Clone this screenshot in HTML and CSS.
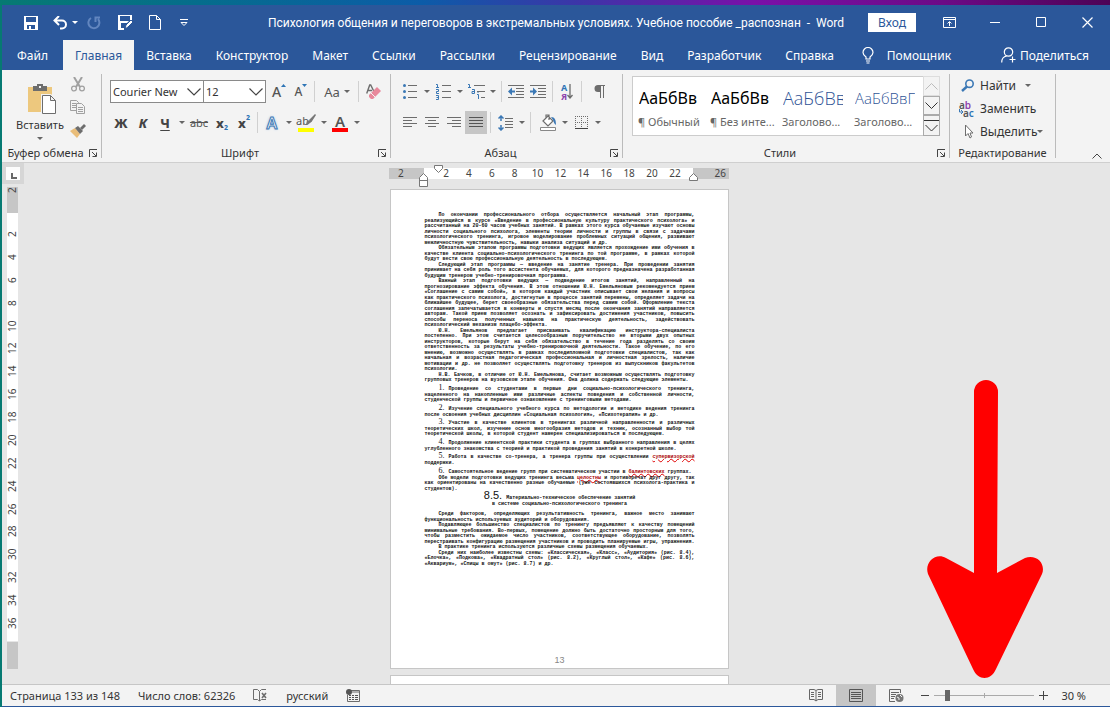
FILE: index.html
```html
<!DOCTYPE html>
<html lang="ru">
<head>
    <meta charset="UTF-8">
    <meta name="viewport" content="width=device-width, initial-scale=1.0">
    <title>Психология общения и переговоров - Word</title>
    <link rel="stylesheet" href="styles.css">
</head>
<body>
<div class="window">
    <header class="titlebar">
        <div class="quick-access">
            <button aria-label="Сохранить"><svg width="14" height="14" viewBox="0 0 14 14"><path d="M0 0h14v14H0z M2 1v5h10V1z M3 9v4h2v-3h2v3h4V9z" fill="#fff" fill-rule="evenodd"/></svg></button>
            <button class="undo" aria-label="Отменить"><svg width="15" height="14" viewBox="0 0 15 14"><path d="M6 0L1.500 4.500L6 9M2 4.500h7a4 4 0 0 1 0 8H7" fill="none" stroke="#fff" stroke-width="2"/></svg></button>
            <button class="dd" aria-label="Список отмены"></button>
            <button class="redo" aria-label="Повторить"><svg width="14" height="14" viewBox="0 0 14 14"><path d="M4 2a5.500 5.500 0 1 0 7 1M8.500 6V1.500H13" fill="none" stroke="#6286bf" stroke-width="2"/></svg></button>
            <button aria-label="Сохранить как"><svg width="16" height="15" viewBox="0 0 16 15"><path d="M0 0h14v5h-2V1H2v5h9l-2 2H3v5h3v2H0z" fill="#fff" fill-rule="evenodd"/><path d="M7 14l1-4 5-5 2 2-5 5z" fill="#fff" stroke="#2b579a"/></svg></button>
            <button aria-label="Создать"><svg width="12" height="15" viewBox="0 0 12 15"><path d="M.5.500h7l4 4v10H.5zM7.500.5v4h4" fill="none" stroke="#fff"/></svg></button>
            <button class="customize" aria-label="Настройка панели"><svg width="9" height="8" viewBox="0 0 9 8"><path d="M0 .5h8M1 3.500h6L4 6.500z" fill="none" stroke="#fff"/></svg></button>
        </div>
        <div class="doc-title">Психология общения и переговоров в экстремальных условиях. Учебное пособие _распознан &nbsp;-&nbsp; Word</div>
        <div class="window-controls">
            <button class="login">Вход</button>
            <button aria-label="Параметры ленты"><svg width="13" height="11" viewBox="0 0 13 11"><path d="M.5.5h12v10H.5zM.5 2.500h12M6.500 9V5M4.500 6.500l2-2 2 2" fill="none" stroke="#fff"/></svg></button>
            <button aria-label="Свернуть"><svg width="11" height="11" viewBox="0 0 11 11"><path d="M0 5.500h10" stroke="#fff"/></svg></button>
            <button aria-label="Развернуть"><svg width="11" height="11" viewBox="0 0 11 11"><path d="M.5.5h9v9h-9z" fill="none" stroke="#fff"/></svg></button>
            <button aria-label="Закрыть"><svg width="11" height="11" viewBox="0 0 11 11"><path d="M.5.5l10 10M10.500.5l-10 10" stroke="#fff" stroke-width="1.200"/></svg></button>
        </div>
    </header>

    <nav class="tabs">
        <a href="#">Файл</a>
        <a href="#" class="active">Главная</a>
        <a href="#">Вставка</a>
        <a href="#">Конструктор</a>
        <a href="#">Макет</a>
        <a href="#">Ссылки</a>
        <a href="#">Рассылки</a>
        <a href="#">Рецензирование</a>
        <a href="#">Вид</a>
        <a href="#">Разработчик</a>
        <a href="#">Справка</a>
        <a href="#" class="helper"><svg width="12" height="17" viewBox="0 0 12 17"><path d="M4 12v-2C2 8.500 1 7.500 1 5.500a5 5 0 0 1 10 0C11 7.500 10 8.500 8 10v2zM4 14h4M4.500 16h3" fill="none" stroke="#fff" stroke-width="1.200"/></svg>Помощник</a>
        <a href="#" class="share"><svg width="15" height="16" viewBox="0 0 15 16"><circle cx="7.500" cy="5" r="4.200" fill="none" stroke="#fff" stroke-width="1.200"/><path d="M.7 15.500c0-3.500 2-6 5-6.500M11.500 9.500v6M8.500 12.500h6" fill="none" stroke="#fff" stroke-width="1.200"/></svg>Поделиться</a>
    </nav>

    <section class="ribbon">
        <div class="group clipboard">
            <div class="group-body">
                <button class="paste">
                    <svg width="29" height="31" viewBox="0 0 29 31"><path d="M0 3h24v25H0z" fill="#edc87e"/><path d="M5 2h4V0h6v2h4v5H5z" fill="#6d6d6d"/><path d="M11 2h2v2h-2z" fill="#f3f3f3"/><path d="M13 10h10l6 6v15H13z" fill="#f3f3f3"/><path d="M14.500 11.500h8l5 5v13h-13zM22.500 11.500v5h5" fill="#fff" stroke="#6d6d6d"/></svg>
                    <span>Вставить</span>
                    <i class="arrow"></i>
                </button>
                <div class="clip-tools">
                    <button aria-label="Вырезать"><svg width="14" height="15" viewBox="0 0 14 15"><path d="M3 0l6 10M11 0L5 10" stroke="#a0a0a0" stroke-width="2"/><circle cx="3" cy="11.500" r="2.400" fill="none" stroke="#a0a0a0" stroke-width="1.300"/><circle cx="11" cy="11.500" r="2.400" fill="none" stroke="#a0a0a0" stroke-width="1.300"/></svg></button>
                    <button aria-label="Копировать"><svg width="16" height="14" viewBox="0 0 16 14"><path d="M.5.5h6l2 2v8h-8zM2 3.500h4M2 5.500h4M2 7.500h4" fill="none" stroke="#a0a0a0"/><path d="M6.500 3.500h5l3 3v7h-8zM8 7.500h5M8 9.500h5M8 11.500h5" fill="#f3f3f3" stroke="#a0a0a0"/></svg></button>
                    <button aria-label="Формат по образцу"><svg width="16" height="15" viewBox="0 0 16 15"><path d="M0 8l5-3 5 6-3 4z" fill="#e9bd79"/><path d="M5 5l3-2 5 5-3 3z" fill="#6d6d6d"/><path d="M10 5l4-4 2 2-4 4z" fill="#6d6d6d"/></svg></button>
                </div>
            </div>
            <div class="group-label"><span>Буфер обмена</span><button class="launcher" aria-label="Буфер обмена, параметры"><svg width="9" height="9" viewBox="0 0 9 9"><path d="M.5 8V.5H8M3 3l4 4M7.500 3.500v4h-4" fill="none" stroke="#444"/></svg></button></div>
        </div>

        <div class="group font">
            <div class="rows">
                <div class="row">
                    <label class="combo combo-font"><select aria-label="Шрифт"><option>Courier New</option></select><svg width="14" height="8" viewBox="0 0 14 8"><path d="M.5.5L7 7 13.500.5" fill="none" stroke="#444" stroke-width="1.200"/></svg></label>
                    <label class="combo combo-size"><select aria-label="Размер шрифта"><option>12</option></select><svg width="14" height="8" viewBox="0 0 14 8"><path d="M.5.5L7 7 13.500.5" fill="none" stroke="#444" stroke-width="1.200"/></svg></label>
                    <button class="tool grow">A<svg width="5" height="3" viewBox="0 0 5 3"><path d="M0 3h5L2.500 0z" fill="#2e75b6"/></svg></button>
                    <button class="tool shrink">A<svg width="5" height="3" viewBox="0 0 5 3"><path d="M0 0h5L2.500 3z" fill="#2e75b6"/></svg></button>
                    <i class="sep"></i>
                    <button class="tool case">Aa<i class="arrow"></i></button>
                    <i class="sep"></i>
                    <button class="tool" aria-label="Удалить форматирование"><svg width="15" height="16" viewBox="0 0 15 16"><path d="M.7 9.500L3.700 1h1l3 6M2 6.500h4" fill="none" stroke="#6d6d6d" stroke-width="1.400"/><path d="M3 11l8-8 4 4-8 8H5l-2-2z" fill="#e8889b"/><path d="M5 9l4 4" stroke="#f3f3f3"/></svg></button>
                </div>
                <div class="row">
                    <button class="tool bold">Ж</button>
                    <button class="tool bold italic">К</button>
                    <button class="tool bold under">Ч</button>
                    <button class="dd" aria-label="Вид подчёркивания"></button>
                    <button class="tool wide strike">abc</button>
                    <button class="tool bold">x<sub>2</sub></button>
                    <button class="tool bold">x<sup>2</sup></button>
                    <i class="sep"></i>
                    <button class="tool effects">A</button>
                    <button class="dd" aria-label="Эффекты текста"></button>
                    <button class="tool marker"><span>ab</span><svg width="10" height="11" viewBox="0 0 10 11"><path d="M0 10.500l1-4 5 0 0 1-4 3zM3 6l6-6 1 1-4.500 7z" fill="#777"/></svg></button>
                    <button class="dd" aria-label="Цвет выделения"></button>
                    <button class="tool text-color">A</button>
                    <button class="dd" aria-label="Цвет текста"></button>
                </div>
            </div>
            <div class="group-label"><span>Шрифт</span><button class="launcher" aria-label="Шрифт, параметры"><svg width="9" height="9" viewBox="0 0 9 9"><path d="M.5 8V.5H8M3 3l4 4M7.500 3.500v4h-4" fill="none" stroke="#444"/></svg></button></div>
        </div>

        <div class="group paragraph">
            <div class="rows">
                <div class="row">
                    <button class="tool" aria-label="Маркеры"><svg width="14" height="15" viewBox="0 0 14 15"><g fill="#3b78b5"><circle cx="1.500" cy="1.500" r="1.500"/><circle cx="1.500" cy="7.500" r="1.500"/><circle cx="1.500" cy="13.500" r="1.500"/></g><path d="M5 1.500h9M5 7.500h9M5 13.500h9" stroke="#6d6d6d"/></svg></button>
                    <button class="dd" aria-label="Библиотека маркеров"></button>
                    <button class="tool" aria-label="Нумерация"><svg width="15" height="17" viewBox="0 0 15 17"><path d="M0 1.500h1.500V5M0 4.500h3M0 6.500h2.500v2h-2v2H3M0 12.500h2.500v4H0M.5 14.500h2" fill="none" stroke="#3b78b5"/><path d="M6 2.500h9M6 8.500h9M6 14.500h9" stroke="#6d6d6d"/></svg></button>
                    <button class="dd" aria-label="Библиотека нумерации"></button>
                    <button class="tool" aria-label="Многоуровневый список"><svg width="17" height="17" viewBox="0 0 17 17"><path d="M0 1.500h1.500V5M0 4.500h3M4 6.500h2.500v4H4v-2h3M9 11.500h1.500V16M10 9v1" fill="none" stroke="#3b78b5"/><path d="M6 2.500h11M9 8.500h8M13 14.500h4" stroke="#6d6d6d"/></svg></button>
                    <button class="dd" aria-label="Список уровней"></button>
                    <i class="sep"></i>
                    <button class="tool" aria-label="Уменьшить отступ"><svg width="16" height="13" viewBox="0 0 16 13"><path d="M0 .5h16M8 3.500h8M8 6.500h8M8 9.500h8M0 12.500h16" stroke="#6d6d6d"/><path d="M0 6.500l4-4v3h3v2H4v3z" fill="#3b78b5"/></svg></button>
                    <button class="tool" aria-label="Увеличить отступ"><svg width="16" height="13" viewBox="0 0 16 13"><path d="M0 .5h16M8 3.500h8M8 6.500h8M8 9.500h8M0 12.500h16" stroke="#6d6d6d"/><path d="M7 6.500l-4-4v3H0v2h3v3z" fill="#3b78b5"/></svg></button>
                    <i class="sep"></i>
                    <button class="tool sort" aria-label="Сортировка"><span><b>А</b><b>Я</b></span><svg width="6" height="15" viewBox="0 0 6 15"><path d="M3 0v14M.5 11L3 14l2.500-3" fill="none" stroke="#6d6d6d" stroke-width="1.300"/></svg></button>
                    <i class="sep"></i>
                    <button class="tool pilcrow" aria-label="Отобразить все знаки"><svg width="11" height="13" viewBox="0 0 11 13"><path d="M4 0h7v1h-1v12H9V1H7v12H6V7H4a3.500 3.500 0 0 1 0-7z" fill="#6d6d6d"/></svg></button>
                </div>
                <div class="row">
                    <button class="tool" aria-label="По левому краю"><svg width="14" height="11" viewBox="0 0 14 11"><path d="M0 .5h14M0 3.500h9M0 6.500h14M0 9.500h9" stroke="#6d6d6d"/></svg></button>
                    <button class="tool" aria-label="По центру"><svg width="14" height="11" viewBox="0 0 14 11"><path d="M0 .5h14M3 3.500h8M0 6.500h14M3 9.500h8" stroke="#6d6d6d"/></svg></button>
                    <button class="tool" aria-label="По правому краю"><svg width="14" height="11" viewBox="0 0 14 11"><path d="M0 .5h14M5 3.500h9M0 6.500h14M5 9.500h9" stroke="#6d6d6d"/></svg></button>
                    <button class="tool pressed" aria-label="По ширине"><svg width="14" height="11" viewBox="0 0 14 11"><path d="M0 .5h14M0 3.500h14M0 6.500h14M0 9.500h14" stroke="#555"/></svg></button>
                    <i class="sep"></i>
                    <button class="tool" aria-label="Интервал"><svg width="15" height="16" viewBox="0 0 15 16"><path d="M3 1v5M3 10v5M.5 3.500L3 1l2.500 2.500M.5 12.500L3 15l2.500-2.500" fill="none" stroke="#3b78b5" stroke-width="1.500"/><path d="M7 3.500h8M7 6.500h8M7 9.500h8M7 12.500h8" stroke="#6d6d6d"/></svg></button>
                    <button class="dd" aria-label="Выбор интервала"></button>
                    <i class="sep"></i>
                    <button class="tool fill" aria-label="Заливка"><svg width="17" height="17" viewBox="0 0 17 17"><path d="M3 7l5-5 5 5-5 5zM6 5V1h3v5" fill="#fff" stroke="#6d6d6d" stroke-width="1.200"/><path d="M11 3c4 0 5 3 5 8-2-1-2-3-3-5z" fill="#3b78b5"/><path d="M.5 13.500h15v3H.5z" fill="#fff" stroke="#888"/></svg></button>
                    <button class="dd" aria-label="Цвет заливки"></button>
                    <button class="tool" aria-label="Границы"><svg width="13" height="13" viewBox="0 0 13 13"><path d="M0 .5h13M0 6.500h13M.5 0v12M6.500 0v12M12.500 0v12" stroke="#6d6d6d" stroke-dasharray="1 1"/><path d="M0 12.500h13" stroke="#444"/></svg></button>
                    <button class="dd" aria-label="Виды границ"></button>
                </div>
            </div>
            <div class="group-label"><span>Абзац</span><button class="launcher" aria-label="Абзац, параметры"><svg width="9" height="9" viewBox="0 0 9 9"><path d="M.5 8V.5H8M3 3l4 4M7.500 3.500v4h-4" fill="none" stroke="#444"/></svg></button></div>
        </div>

        <div class="group styles">
            <div class="gallery">
                <button class="style-item"><b>АаБбВв</b><span>¶ Обычный</span></button>
                <button class="style-item"><b>АаБбВв</b><span>¶ Без инте...</span></button>
                <button class="style-item heading1"><b>АаБбВв</b><span>Заголово...</span></button>
                <button class="style-item heading2"><b>АаБбВвГ</b><span>Заголово...</span></button>
                <div class="gallery-scroll">
                    <button aria-label="Вверх" disabled><svg width="13" height="7" viewBox="0 0 13 7"><path d="M.5 6.500l6-6 6 6" fill="none" stroke="#bbb"/></svg></button>
                    <button aria-label="Вниз"><svg width="13" height="7" viewBox="0 0 13 7"><path d="M.5.5l6 6 6-6" fill="none" stroke="#333"/></svg></button>
                    <button aria-label="Все стили"><svg width="15" height="12" viewBox="0 0 15 12"><path d="M0 .5h15M1.500 5l6 6 6-6" fill="none" stroke="#333"/></svg></button>
                </div>
            </div>
            <div class="group-label"><span>Стили</span><button class="launcher" aria-label="Стили, параметры"><svg width="9" height="9" viewBox="0 0 9 9"><path d="M.5 8V.5H8M3 3l4 4M7.500 3.500v4h-4" fill="none" stroke="#444"/></svg></button></div>
        </div>

        <div class="group editing">
            <div class="edit-list">
                <button><svg width="14" height="13" viewBox="0 0 14 13"><circle cx="8.500" cy="4.700" r="3.700" fill="none" stroke="#3b78b5" stroke-width="1.600"/><path d="M6 7.500L1 12" stroke="#3b78b5" stroke-width="2.400"/></svg><span class="find">Найти</span><i class="arrow"></i></button>
                <button><span class="replace-icon"><b>a<em>b</em></b><b><svg width="4" height="5" viewBox="0 0 4 5"><path d="M.5 0v3H4M2 1l2 2-2 2" fill="none" stroke="#3b78b5"/></svg>a<u>c</u></b></span><span>Заменить</span></button>
                <button><svg width="14" height="15" viewBox="0 0 14 15"><path d="M4.500 1v11l2.500-2.500L9 14l1.500-1L9 9h3z" fill="#fff" stroke="#6d6d6d"/></svg><span>Выделить</span><i class="arrow"></i></button>
            </div>
            <div class="group-label"><span>Редактирование</span></div>
        </div>
        <button class="collapse" aria-label="Свернуть ленту"><svg width="10" height="6" viewBox="0 0 10 6"><path d="M.5 5.500L5 1l4.500 4.500" fill="none" stroke="#444"/></svg></button>
    </section>

    <main class="workspace">
        <aside class="side">
            <button class="tab-stop" aria-label="Табуляция"><svg width="6" height="6" viewBox="0 0 6 6"><path d="M1 0v5h5" fill="none" stroke="#666" stroke-width="2"/></svg></button>
            <div class="ruler-v">
                <div class="margin-top"><span>2</span></div>
                <div class="ticks"><span>2</span><span>4</span><span>6</span><span>8</span><span>10</span><span>12</span><span>14</span><span>16</span><span>18</span><span>20</span><span>22</span><span>24</span><span>26</span><span>28</span><span>30</span><span>32</span><span>34</span><span>36</span></div>
                <div class="margin-bottom"></div>
            </div>
        </aside>
        <div class="canvas">
            <div class="ruler-h">
                <div class="margin-left">2</div>
                <div class="ticks"><span>2</span><span>4</span><span>6</span><span>8</span><span>10</span><span>12</span><span>14</span><span>16</span><span>18</span><span>20</span><span>22</span></div>
                <div class="margin-right">26</div>
                <svg class="mark mark-first" width="9" height="8" viewBox="0 0 9 8"><path d="M.5.5h8v3l-4 4-4-4z" fill="#fff" stroke="#777"/></svg>
                <svg class="mark mark-hang" width="9" height="14" viewBox="0 0 9 14"><path d="M.5 4.500l4-4 4 4v9h-8zM.5 7.500h8" fill="#fff" stroke="#777"/></svg>
                <svg class="mark mark-right" width="9" height="8" viewBox="0 0 9 8"><path d="M.5 7.500v-3l4-4 4 4v3z" fill="#fff" stroke="#777"/></svg>
            </div>
            <article class="page">
                <div class="prose">
                    <p class="first">По окончании профессионального отбора осуществляется начальный этап программы,</p>
                    <p>реализующийся в курсе «Введение в профессиональную культуру практического психолога» и</p>
                    <p>рассчитанный на 20-60 часов учебных занятий. В рамках этого курса обучаемые изучают основы</p>
                    <p>личности социального психолога, элементы теории личности и группы в связи с задачами</p>
                    <p>психологического тренинга, игровое моделирование проблемных ситуаций общения, развивают</p>
                    <p class="last">межличностную чувствительность, навыки анализа ситуаций и др.</p>
                    <p class="first">Обязательным этапом программы подготовки ведущих является прохождение ими обучения в</p>
                    <p>качестве клиента социально-психологического тренинга по той программе, в рамках которой</p>
                    <p class="last">будут вести свою профессиональную деятельность в последующем.</p>
                    <p class="first">Следующий этап программы — введение на занятие тренера. При проведении занятия</p>
                    <p>принимает на себя роль того ассистента обучаемых, для которого предназначена разработанная</p>
                    <p class="last">будущим тренером учебно-тренировочная программа.</p>
                    <p class="first">Важный этап подготовки ведущих — подведение итогов занятий, направленный на</p>
                    <p>прогнозирование эффекта обучения. В этом отношении Ю.Н. Емельяновым рекомендуется прием</p>
                    <p>«Соглашение с самим собой», в котором каждый участник описывает свои желания и вопросы</p>
                    <p>как практического психолога, достигнутые в процессе занятий перемены, определяет задачи на</p>
                    <p>ближайшее будущее, берет своеобразные обязательства перед самим собой. Оформление текста</p>
                    <p>соглашения запечатывается в конверты и спустя месяц после окончания занятий направляется</p>
                    <p>авторам. Такой прием позволяет осознать и зафиксировать достижения участников, повысить</p>
                    <p>способы переноса полученных навыков на практическую деятельность, задействовать</p>
                    <p class="last">психологический механизм плацебо-эффекта.</p>
                    <p class="first">Ю.Н. Емельянов предлагает присваивать квалификацию инструктора-специалиста</p>
                    <p>постепенно. При этом считается целесообразным поручительство не вторыми двух опытных</p>
                    <p>инструкторов, которые берут на себя обязательство в течение года разделять со своим</p>
                    <p>ответственность за результаты учебно-тренировочной деятельности. Такое обучение, по его</p>
                    <p>мнению, возможно осуществлять в рамках последипломной подготовки специалистов, так как</p>
                    <p>начальная и возрастная педагогическая профессиональная и личностная зрелость, наличие</p>
                    <p>мотивации и др. не позволяет осуществлять подготовку тренеров из выпускников факультетов</p>
                    <p class="last">психологии.</p>
                    <p class="first">Н.В. Бачков, в отличие от Ю.Н. Емельянова, считает возможным осуществлять подготовку</p>
                    <p class="last">групповых тренеров на вузовском этапе обучения. Она должна содержать следующие элементы.</p>
                </div>
                <ol>
                    <li><p class="first"><i>1.</i>Проведение со студентами в первые дни социально-психологического тренинга,</p>
                        <p>нацеленного на накопленные ими различные аспекты поведения и собственной личности,</p>
                        <p class="last">студенческой группы и первичное ознакомление с тренинговыми методами.</p></li>
                    <li><p class="first"><i>2.</i>Изучение специального учебного курса по методологии и методике ведения тренинга</p>
                        <p class="last">после освоения учебных дисциплин «Социальная психология», «Психотерапия» и др.</p></li>
                    <li><p class="first"><i>3.</i>Участие в качестве клиентов в тренингах различной направленности и различных</p>
                        <p>теоретических школ, изучение основ многообразия методов и техник, осознанный выбор той</p>
                        <p class="last">теоретической школы, в которой студент намерен специализироваться в последующем.</p></li>
                    <li><p class="first"><i>4.</i>Продолжение клиентской практики студента в группах выбранного направления в целях</p>
                        <p class="last">углубленного знакомства с теорией и практикой проведения занятий в конкретной школе.</p></li>
                    <li><p class="first"><i>5.</i>Работа в качестве со-тренера, а тренера группы при осуществлении <u>супервизорской</u></p>
                        <p class="last">поддержки.</p></li>
                    <li class="spaced"><p class="first last"><i>6.</i>Самостоятельное ведение групп при систематическом участии в <u>балинтовских</u> группах.</p>
                        <p class="first">Обе модели подготовки ведущих тренинга весьма <u>целостны</u> и противоречат друг другу, так</p>
                        <p>как ориентированы на качественно разные обучаемые (уже состоявшихся психолога-практика и</p>
                        <p class="last">студентов).</p></li>
                </ol>
                <h2><i>8.5.</i>Материально-техническое обеспечение занятий<br>в системе социально-психологического тренинга</h2>
                <div class="prose">
                    <p class="first">Среди факторов, определяющих результативность тренинга, важное место занимают</p>
                    <p class="last">функциональность используемых аудиторий и оборудования.</p>
                    <p class="first">Подавляющее большинство специалистов по тренингу предъявляют к качеству помещений</p>
                    <p>минимальные требования. Во-первых, помещение должно быть достаточно просторным для того,</p>
                    <p>чтобы разместить ожидаемое число участников, соответствующее оборудование, позволять</p>
                    <p class="last">перестраивать конфигурацию размещения участников и проводить планируемые игры, упражнения.</p>
                    <p class="first last">В практике тренинга используются различные схемы размещения обучаемых.</p>
                    <p class="first">Среди них наиболее известны схемы: «Классическая», «Класс», «Аудитория» (рис. 8.4),</p>
                    <p>«Елочка», «Подкова», «Квадратный стол» (рис. 8.2), «Круглый стол», «Кафе» (рис. 8.6),</p>
                    <p class="last">«Аквариум», «Спицы в омут» (рис. 8.7) и др.</p>
                </div>
                <footer>13</footer>
            </article>
            <article class="page next-page"></article>
        </div>
        <svg class="pointer" width="116" height="298" viewBox="0 0 116 298"><path d="M47 12a12 12 0 0 1 24 0L70 193 98 178c12-4 21 6 17 16L69 289c-5 12-18 12-23 0L1 194c-4-12 8-22 18-16l28 15z" fill="#f00"/></svg>
    </main>

    <footer class="statusbar">
        <span>Страница 133 из 148</span>
        <span>Число слов: 62326</span>
        <button aria-label="Правописание"><svg width="15" height="13" viewBox="0 0 15 13"><path d="M7 11.500H5.500l-1-1H.5V.5h4l2 2V12M6.500 2.500l2-2H13M6.500 12l2-1.500H13" fill="none" stroke="#6d6d6d"/><path d="M9 4l4 5M13 4L9 9" stroke="#6d6d6d" stroke-width="1.600"/></svg></button>
        <span>русский</span>
        <button aria-label="Запись макроса"><svg width="14" height="13" viewBox="0 0 14 13"><path d="M5 1.500h8.500v11h-12V6M6 3h7" fill="none" stroke="#6d6d6d"/><circle cx="3" cy="3" r="3" fill="#555"/><path d="M3 6.500h2M6 6.500h2M9 6.500h3M3 8.500h2M6 8.500h2M9 8.500h3M3 10.500h2M6 10.500h2M9 10.500h3" stroke="#555"/></svg></button>
        <div class="views">
            <button aria-label="Режим чтения"><svg width="14" height="13" viewBox="0 0 14 13"><path d="M.5.5H5l2 1 2-1h4.500v10H9l-2 1.500L5 10.500H.5zM7 2v10M2 3.500h3M2 5.500h3M2 7.500h3M9 3.500h3M9 5.500h3M9 7.500h3" fill="none" stroke="#666"/></svg></button>
            <button class="current" aria-label="Разметка страницы"><svg width="14" height="13" viewBox="0 0 14 13"><path d="M.5.5h13v12H.5zM2 3.500h10M2 5.500h10M2 7.500h10M2 9.500h10" fill="none" stroke="#555"/></svg></button>
            <button aria-label="Веб-документ"><svg width="15" height="14" viewBox="0 0 15 14"><path d="M6 12.500H.5V.5h11V4M2 3.500h8M2 5.500h5M2 7.500h4M2 9.500h3" fill="none" stroke="#666"/><circle cx="10.500" cy="9" r="4" fill="#777"/><path d="M8 8l2 1v2M11 6l2 2" stroke="#f3f3f3" fill="none"/></svg></button>
        </div>
        <div class="zoom">
            <button aria-label="Уменьшить"><svg width="9" height="9" viewBox="0 0 9 9"><path d="M1 4.500h8" stroke="#444"/></svg></button>
            <input type="range" min="10" max="190" value="30" aria-label="Масштаб">
            <button aria-label="Увеличить"><svg width="9" height="9" viewBox="0 0 9 9"><path d="M0 4.500h9M4.500 0v9" stroke="#444"/></svg></button>
        </div>
        <button class="percent">30 %</button>
    </footer>
</div>
</body>
</html>
```
FILE: styles.css
```css
* {
    box-sizing: border-box;
}
body {
    margin: 0;
    padding: 5px 0 0 2px;
    height: 100vh;
    background: linear-gradient(90deg, #067a72 0%, #056d8c 18%, #0c5ca8 38%, #3c35a8 52%, #7a10a8 68%, #6c0a86 85%, #4d0355 100%);
    font-family: "Noto Sans", "Open Sans", sans-serif;
    font-size: 12px;
    color: #333;
}
button {
    font: inherit;
    color: inherit;
    background: none;
    border: none;
    padding: 0;
    display: flex;
    align-items: center;
    justify-content: center;
}
svg {
    display: block;
    flex: none;
}
.window {
    height: 100%;
    display: flex;
    flex-direction: column;
    border-bottom: 1px solid #2b579a;
    background: #f3f3f3;
    overflow: hidden;
}

/* title bar */
.titlebar {
    display: grid;
    grid-template-columns: 242px 1fr 242px;
    align-items: center;
    height: 35px;
    flex: none;
    background: #2b579a;
    color: white;
}
.quick-access {
    display: flex;
    align-items: center;
    padding-left: 22px;
    gap: 15px;
}
.quick-access .undo {
    margin-right: -14px;
}
.quick-access .dd {
    margin-right: -8px;
}
.quick-access .redo {
    margin-right: 2px;
}
.quick-access .customize {
    margin-left: 4px;
}
.doc-title {
    text-align: center;
    white-space: nowrap;
    font-family: Roboto, "Noto Sans", sans-serif;
}
.window-controls {
    display: flex;
    align-items: center;
    height: 100%;
}
.window-controls button {
    width: 46px;
    height: 30px;
}
.window-controls .login {
    width: 48px;
    height: 19px;
    background: white;
    color: #2b579a;
    margin-right: 10px;
}

/* tabs */
.tabs {
    display: flex;
    height: 30px;
    flex: none;
    background: #2b579a;
}
.tabs a {
    display: flex;
    align-items: center;
    padding: 0 12px;
    color: white;
    text-decoration: none;
    white-space: nowrap;
}
.tabs a:first-child {
    padding-left: 15px;
}
.tabs a.active {
    background: #f3f3f3;
    color: #2b579a;
    margin: 0 0 0 3px;
}
.tabs .helper {
    gap: 13px;
    margin-left: 4px;
}
.tabs .share {
    gap: 4px;
    padding: 0;
    margin: 0 21px 0 auto;
}

/* ribbon */
.ribbon {
    display: flex;
    height: 93px;
    flex: none;
    border-bottom: 1px solid #cfcfcf;
    padding-top: 4px;
}
.group {
    display: flex;
    flex-direction: column;
    justify-content: space-between;
    height: 84px;
    border-right: 1px solid #bbb;
    flex: none;
}
.group-label {
    display: flex;
    align-items: center;
    height: 10px;
    font-size: 11px;
    line-height: 10px;
    white-space: nowrap;
}
.group-label span {
    flex: 1;
    text-align: center;
}
.launcher {
    margin-right: 3px;
}
.clipboard {
    width: 100px;
}
.font {
    width: 289px;
}
.paragraph {
    width: 232px;
}
.styles {
    flex: 1;
}
.editing {
    width: 106px;
}
.group-body {
    display: flex;
    padding-top: 3px;
}
.paste {
    flex-direction: column;
    width: 66px;
    padding-left: 10px;
    font-size: 11px;
}
.paste svg {
    margin-left: 4px;
}
.paste span {
    line-height: 20px;
}
.paste .arrow {
    margin-top: 2px;
}
.clip-tools button {
    width: 20px;
    height: 23px;
    align-items: flex-start;
}
.arrow,
.dd::after {
    content: "";
    border: 3px solid transparent;
    border-top-color: #666;
    border-bottom: none;
}
.dd {
    width: 11px;
    height: 22px;
}
.quick-access .dd::after {
    border-top-color: white;
}
.rows {
    padding: 6px 0 0 8px;
    display: flex;
    flex-direction: column;
    gap: 8px;
}
.row {
    display: flex;
    align-items: center;
    height: 23px;
}
.sep {
    width: 1px;
    height: 21px;
    margin: 0 3px 0 2px;
    background: #d0d0d0;
}
.tool {
    width: 22px;
    height: 23px;
    color: #555;
}
.tool.wide {
    width: 24px;
}
.tool.pressed {
    background: #c6c6c6;
}
.combo {
    position: relative;
    height: 23px;
}
.combo select {
    appearance: none;
    width: 100%;
    height: 100%;
    border: 1px solid #8a8a8a;
    border-radius: 0;
    background: white;
    color: #333;
    font: inherit;
    font-size: 11px;
    padding: 0 2px;
}
.combo svg {
    position: absolute;
    right: 3px;
    top: 8px;
    pointer-events: none;
}
.combo-font {
    width: 94px;
}
.combo-size {
    width: 63px;
    margin: 0 2px 0 -1px;
}
.grow,
.shrink {
    font-size: 14px;
    font-weight: 500;
}
.shrink {
    font-size: 12px;
}
.grow svg,
.shrink svg {
    align-self: flex-start;
    margin-top: 4px;
}
.case {
    width: 38px;
    gap: 4px;
    font-size: 13px;
}
.bold {
    font-weight: 800;
    font-size: 13px;
    color: #444;
}
.italic {
    font-style: italic;
}
.under {
    text-decoration: underline;
    text-underline-offset: 2px;
}
.strike {
    font-size: 11px;
    text-decoration: line-through;
}
.tool sub,
.tool sup {
    font-size: 7px;
    line-height: 7px;
    color: #2e75b6;
    align-self: flex-end;
    margin-bottom: 3px;
}
.tool sup {
    align-self: flex-start;
    margin-top: 3px;
}
.effects {
    font-size: 16px;
    font-weight: 600;
    color: #f3f3f3;
    -webkit-text-stroke: 1px #3b78b5;
    text-shadow: 0 0 3px #8db8e2;
}
.tool.marker,
.tool.text-color {
    width: 16px;
    height: 18px;
    margin: 0 3px;
    border: solid yellow;
    border-width: 0 0 4px;
    line-height: 14px;
}
.tool.marker {
    margin: 0 4px;
    font-size: 11px;
    align-items: flex-start;
}
.marker svg {
    margin-left: -3px;
}
.tool.text-color {
    border-color: red;
    font-size: 15px;
    font-weight: 600;
}
.sort span {
    display: flex;
    flex-direction: column;
    font-size: 9px;
    line-height: 9px;
    color: #2e75b6;
}
.sort b + b {
    color: #8e44ad;
}
.paragraph .sep {
    margin: 0 3px;
}
.paragraph .pilcrow,
.paragraph .fill {
    margin-left: 3px;
}

/* style gallery */
.gallery {
    display: flex;
    height: 60px;
    margin: 2px 9px 0 9px;
    border: 1px solid #ccc;
    background: white;
}
.style-item {
    width: 72px;
    flex-direction: column;
    align-items: flex-start;
    padding: 6px 0 0 5px;
    overflow: hidden;
    white-space: nowrap;
}
.style-item b {
    width: 60px;
    margin-left: 1px;
    overflow: hidden;
    text-align: left;
    font-weight: normal;
    font-size: 16px;
    line-height: 26px;
    color: black;
}
.style-item span {
    font-size: 11px;
    line-height: 22px;
    color: #666;
}
.style-item.heading1 b {
    font-family: "Open Sans", sans-serif;
    font-weight: 300;
    font-size: 18px;
    color: #2f5496;
}
.style-item.heading2 b {
    font-family: "Open Sans", sans-serif;
    font-weight: 300;
    font-size: 15px;
    color: #2f5496;
}
.gallery-scroll {
    display: grid;
    grid-template-rows: 20px 19px 21px;
    width: 17px;
    margin: -1px -1px -1px auto;
}
.gallery-scroll button {
    border: 1px solid #aaa;
    background: #f3f3f3;
}
.gallery-scroll button:disabled {
    border-color: #ddd;
}

/* editing */
.edit-list {
    padding-left: 11px;
}
.edit-list button {
    height: 23px;
    gap: 5px;
}
.edit-list svg {
    width: 14px;
}
.find {
    margin-right: 4px;
}
.edit-list button:last-child .arrow {
    margin-left: -5px;
}
.replace-icon {
    display: flex;
    flex-direction: column;
    width: 16px;
    margin-left: -2px;
    font-size: 10px;
    line-height: 8px;
    color: #555;
}
.replace-icon b {
    display: flex;
    font-weight: 600;
}
.replace-icon em {
    font-style: normal;
    color: #8e44ad;
}
.replace-icon u {
    text-decoration: none;
    color: #2e75b6;
}
.replace-icon svg {
    width: 4px;
}
.collapse {
    margin: auto 8px 3px auto;
    padding-left: 36px;
}

/* workspace */
.workspace {
    position: relative;
    flex: 1;
    min-height: 0;
    display: flex;
    overflow: hidden;
    background: #e6e6e6;
}
.side {
    width: 22px;
    flex: none;
}
.tab-stop {
    width: 22px;
    height: 21px;
    border: 4px solid #d6d6d6;
    background: #fcfcfc;
    padding: 4px 0 0 2px;
}
.ruler-v {
    width: 11px;
    margin: 3px 0 0 5px;
    font-size: 10px;
    line-height: 11px;
    color: #444;
}
.ruler-v span {
    writing-mode: vertical-rl;
    transform: rotate(180deg);
    text-align: center;
    height: 16px;
    line-height: 11px;
}
.margin-top {
    height: 26px;
    background: #c6c6c6;
}
.margin-top span {
    display: block;
    height: 6px;
}
.ruler-v .ticks {
    display: flex;
    flex-direction: column;
    justify-content: space-between;
    height: 428px;
    padding: 13px 0 10px;
    background: white;
}
.margin-bottom {
    height: 27px;
    margin-top: 1px;
    background: #c6c6c6;
}
.canvas {
    flex: 1;
    display: flex;
    flex-direction: column;
    align-items: center;
    padding: 5px 16px 0 0;
}
.ruler-h {
    position: relative;
    display: flex;
    width: 340px;
    height: 11px;
    flex: none;
    font-size: 10px;
    line-height: 11px;
    color: #444;
}
.margin-left {
    width: 35px;
    padding-left: 9px;
    background: #c6c6c6;
}
.margin-right {
    width: 36px;
    padding-right: 3px;
    text-align: right;
    background: #c6c6c6;
}
.ruler-h .ticks {
    flex: 1;
    display: flex;
    justify-content: space-between;
    padding: 0 10px 0 14px;
    background: white;
}
.ruler-h .ticks span {
    width: 16px;
    text-align: center;
}
.mark {
    position: absolute;
}
.mark-first {
    left: 45px;
    top: -3px;
}
.mark-hang {
    left: 30px;
    top: 5px;
}
.mark-right {
    right: 31px;
    top: 5px;
}

/* document page */
.page {
    width: 339px;
    flex: none;
    margin-top: 10px;
    padding: 22px 33px 2px 34px;
    border: 1px solid #c6c6c6;
    background: white;
    color: #111;
    font-family: "Liberation Mono", monospace;
    font-size: 5px;
    font-weight: bold;
    white-space: nowrap;
}
.next-page {
    margin-top: 6px;
    height: 40px;
}
.prose,
.page li {
    display: grid;
    grid-template-columns: 100%;
    grid-auto-rows: 6px 5px;
}
.page li {
    grid-template-rows: 9px;
    grid-auto-rows: 5px 6px;
}
.page p {
    margin: 0;
    line-height: 6px;
    text-align-last: justify;
}
.page p.first {
    padding-left: 14px;
}
.page p.last {
    text-align-last: left;
}
.page ol {
    margin: 0;
    padding: 0;
    list-style: none;
}
.page li.spaced {
    margin-top: 1px;
}
.page li > :first-child {
    padding-top: 3px;
}
.page i {
    font: 8px "Liberation Serif", serif;
    line-height: 0;
    margin-right: 4px;
}
.page p u {
    text-decoration: underline wavy #e00000 1px;
    text-underline-offset: 0;
    color: #a00;
}
.page h2 {
    margin: 4px 0;
    text-align: center;
    font-size: 5px;
    line-height: 6px;
}
.page h2 i {
    font: 11px "Liberation Sans", sans-serif;
    line-height: 0;
}
.page footer {
    margin-top: 88px;
    text-align: center;
    font: 9px "Liberation Sans", sans-serif;
    line-height: 12px;
    color: #888;
}
.pointer {
    position: absolute;
    right: 67px;
    bottom: 6px;
}

/* status bar */
.statusbar {
    display: flex;
    align-items: center;
    height: 22px;
    flex: none;
    gap: 18px;
    padding-left: 8px;
    border-top: 1px solid #c6c6c6;
    font-size: 11px;
    white-space: nowrap;
}
.views {
    display: flex;
    height: 100%;
    margin-left: auto;
}
.views button {
    width: 40px;
}
.views .current {
    background: #c6c6c6;
}
.zoom {
    display: flex;
    align-items: center;
    gap: 5px;
    margin-left: -14px;
}
.zoom input {
    appearance: none;
    width: 100px;
    height: 11px;
    margin: 0;
    background:
        linear-gradient(#aaa, #aaa) center / 1px 5px no-repeat,
        linear-gradient(#aaa, #aaa) center / 100% 1px no-repeat;
}
.zoom input::-webkit-slider-thumb {
    appearance: none;
    width: 5px;
    height: 11px;
    background: #666;
}
.percent {
    margin: 0 24px 0 -5px;
}
```
